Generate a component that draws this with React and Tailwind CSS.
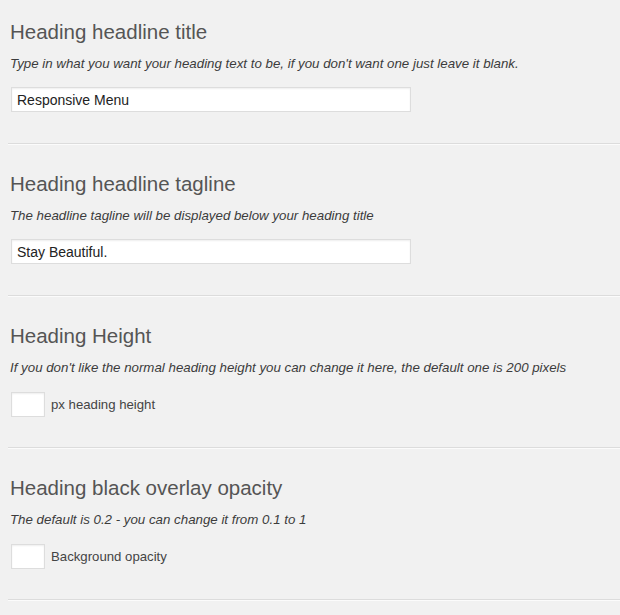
const SECTIONS = [
  {
    title: 'Heading headline title',
    desc: "Type in what you want your heading text to be, if you don't want one just leave it blank.",
    value: 'Responsive Menu',
  },
  {
    title: 'Heading headline tagline',
    desc: 'The headline tagline will be displayed below your heading title',
    value: 'Stay Beautiful.',
  },
  {
    title: 'Heading Height',
    desc: "If you don't like the normal heading height you can change it here, the default one is 200 pixels",
    label: 'px heading height',
  },
  {
    title: 'Heading black overlay opacity',
    desc: 'The default is 0.2 - you can change it from 0.1 to 1',
    label: 'Background opacity',
  },
]

function Section({ s }) {
  return (
    <div className={s.label ? 'pl-[2px] pt-[25px] pb-[30px]' : 'pl-[2px] pt-[25px] pb-[31px]'}>
      <h3 className="text-[20.5px] leading-[27px] text-[#555] font-normal">{s.title}</h3>
      <p className="mt-[10px] text-[13.3px] leading-[18px] italic text-[#3c3c3c]">{s.desc}</p>
      {s.label ? (
        <div className="mt-[15px] flex items-center gap-[6px] pl-[1px]">
          <input
            readOnly
            className="w-[34px] h-[25px] bg-white border border-[#ddd] shadow-[inset_0_1px_2px_rgba(0,0,0,0.07)] outline-none"
          />
          <span className="text-[13.2px] text-[#444]">{s.label}</span>
        </div>
      ) : (
        <div className="mt-[14px] pl-[1px]">
          <input
            readOnly
            value={s.value}
            className="w-[400px] h-[25px] px-[5px] bg-white border border-[#ddd] shadow-[inset_0_1px_2px_rgba(0,0,0,0.07)] text-[14px] text-[#222] outline-none"
          />
        </div>
      )}
    </div>
  )
}

export default function App() {
  return (
    <div
      className="w-[620px] h-[615px] overflow-hidden bg-[#f1f1f1] pl-[8px]"
      style={{ fontFamily: '"Liberation Sans", Arial, sans-serif' }}
    >
      <div className="-mt-[7px]">
        {SECTIONS.map((s, i) => (
          <div key={i}>
            <Section s={s} />
            <div className="border-t border-t-[#dcdcdc] border-b border-b-[#fbfbfb]" />
          </div>
        ))}
      </div>
    </div>
  )
}
